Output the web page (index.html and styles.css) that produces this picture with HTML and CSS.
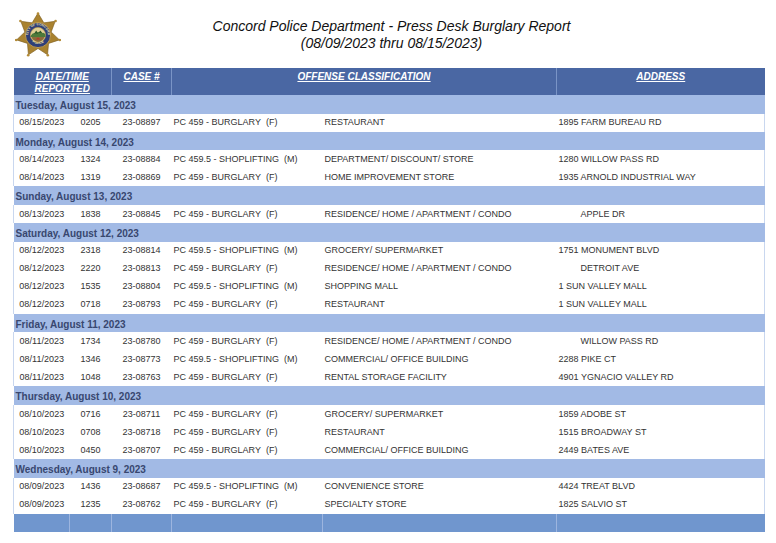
FILE: index.html
```html
<!DOCTYPE html>
<html lang="en">
<head>
<meta charset="utf-8">
<title>Concord Police Department - Press Desk Burglary Report</title>
<link rel="stylesheet" href="styles.css">
</head>
<body>
<div class="page">
  <header class="masthead">
    <div class="logo">
      <svg width="46" height="46" viewBox="0 0 46 46" aria-label="City of Concord Police badge">
        <defs>
          <path id="ringTop" d="M 13.2 23 A 9.8 9.8 0 0 1 32.8 23"/>
          <path id="ringBot" d="M 14.5 26.5 A 9.3 9.3 0 0 0 31.5 26.5"/>
        </defs>
        <polygon class="star" points="23,1 28.86,10.84 40.2,9.28 36.16,20 44.45,27.9 33.55,31.42 32.55,42.82 23,36.5 13.45,42.82 12.45,31.42 1.55,27.9 9.84,20 5.8,9.28 17.14,10.84"/>
        <circle cx="23" cy="1.6" r="1.3" class="tip"/>
        <circle cx="40.6" cy="9.0" r="1.3" class="tip"/>
        <circle cx="44.9" cy="28" r="1.3" class="tip"/>
        <circle cx="32.8" cy="43.3" r="1.3" class="tip"/>
        <circle cx="13.2" cy="43.3" r="1.3" class="tip"/>
        <circle cx="1.1" cy="28" r="1.3" class="tip"/>
        <circle cx="5.4" cy="9.0" r="1.3" class="tip"/>
        <circle cx="23" cy="23" r="12.6" class="ring"/>
        <circle cx="23" cy="23" r="7.6" class="field"/>
        <path class="hill" d="M15.6 24 Q18 19.5 21 21.5 Q24 18.5 27 21 Q29 20 30.4 22.5 L30.4 25 L15.6 25 Z"/>
        <path class="tree" d="M19 21.8 L21.2 18.6 L23.4 21.8 Z M23.6 21 L25.4 18.4 L27.2 21 Z"/>
        <path class="ground" d="M16.4 25 L29.6 25 Q27.5 29.8 23 30.6 Q18.5 29.8 16.4 25 Z"/>
        <path class="roof" d="M20.6 27.4 L23 25.6 L25.4 27.4 Z"/>
        <text class="ringtext"><textPath href="#ringTop" startOffset="50%" text-anchor="middle">CITY OF CONCORD</textPath></text>
        <text class="ringtext"><textPath href="#ringBot" startOffset="50%" text-anchor="middle">POLICE</textPath></text>
      </svg>
    </div>
    <div class="title">
      <p>Concord Police Department - Press Desk Burglary Report</p>
      <p>(08/09/2023 thru 08/15/2023)</p>
    </div>
  </header>

  <table class="report">
    <colgroup>
      <col class="c-date"><col class="c-time"><col class="c-case"><col class="c-off"><col class="c-cls"><col class="c-addr">
    </colgroup>
    <thead>
      <tr class="head">
        <th colspan="2"><span>DATE/TIME</span><br><span>REPORTED</span></th>
        <th class="div"><span>CASE #</span></th>
        <th colspan="2" class="div"><span>OFFENSE CLASSIFICATION</span></th>
        <th class="div"><span>ADDRESS</span></th>
      </tr>
    </thead>
    <tbody>
      <tr class="group"><td colspan="6">Tuesday, August 15, 2023</td></tr>
      <tr class="data"><td class="ctr">08/15/2023</td><td class="ctr">0205</td><td class="ctr">23-08897</td><td>PC 459 - BURGLARY&nbsp; (F)</td><td>RESTAURANT</td><td>1895 FARM BUREAU RD</td></tr>

      <tr class="group"><td colspan="6">Monday, August 14, 2023</td></tr>
      <tr class="data"><td class="ctr">08/14/2023</td><td class="ctr">1324</td><td class="ctr">23-08884</td><td>PC 459.5 - SHOPLIFTING&nbsp; (M)</td><td>DEPARTMENT/ DISCOUNT/ STORE</td><td>1280 WILLOW PASS RD</td></tr>
      <tr class="data"><td class="ctr">08/14/2023</td><td class="ctr">1319</td><td class="ctr">23-08869</td><td>PC 459 - BURGLARY&nbsp; (F)</td><td>HOME IMPROVEMENT STORE</td><td>1935 ARNOLD INDUSTRIAL WAY</td></tr>

      <tr class="group"><td colspan="6">Sunday, August 13, 2023</td></tr>
      <tr class="data"><td class="ctr">08/13/2023</td><td class="ctr">1838</td><td class="ctr">23-08845</td><td>PC 459 - BURGLARY&nbsp; (F)</td><td>RESIDENCE/ HOME / APARTMENT / CONDO</td><td class="indent">APPLE DR</td></tr>

      <tr class="group"><td colspan="6">Saturday, August 12, 2023</td></tr>
      <tr class="data"><td class="ctr">08/12/2023</td><td class="ctr">2318</td><td class="ctr">23-08814</td><td>PC 459.5 - SHOPLIFTING&nbsp; (M)</td><td>GROCERY/ SUPERMARKET</td><td>1751 MONUMENT BLVD</td></tr>
      <tr class="data"><td class="ctr">08/12/2023</td><td class="ctr">2220</td><td class="ctr">23-08813</td><td>PC 459 - BURGLARY&nbsp; (F)</td><td>RESIDENCE/ HOME / APARTMENT / CONDO</td><td class="indent">DETROIT AVE</td></tr>
      <tr class="data"><td class="ctr">08/12/2023</td><td class="ctr">1535</td><td class="ctr">23-08804</td><td>PC 459.5 - SHOPLIFTING&nbsp; (M)</td><td>SHOPPING MALL</td><td>1 SUN VALLEY MALL</td></tr>
      <tr class="data"><td class="ctr">08/12/2023</td><td class="ctr">0718</td><td class="ctr">23-08793</td><td>PC 459 - BURGLARY&nbsp; (F)</td><td>RESTAURANT</td><td>1 SUN VALLEY MALL</td></tr>

      <tr class="group"><td colspan="6">Friday, August 11, 2023</td></tr>
      <tr class="data"><td class="ctr">08/11/2023</td><td class="ctr">1734</td><td class="ctr">23-08780</td><td>PC 459 - BURGLARY&nbsp; (F)</td><td>RESIDENCE/ HOME / APARTMENT / CONDO</td><td class="indent">WILLOW PASS RD</td></tr>
      <tr class="data"><td class="ctr">08/11/2023</td><td class="ctr">1346</td><td class="ctr">23-08773</td><td>PC 459.5 - SHOPLIFTING&nbsp; (M)</td><td>COMMERCIAL/ OFFICE BUILDING</td><td>2288 PIKE CT</td></tr>
      <tr class="data"><td class="ctr">08/11/2023</td><td class="ctr">1048</td><td class="ctr">23-08763</td><td>PC 459 - BURGLARY&nbsp; (F)</td><td>RENTAL STORAGE FACILITY</td><td>4901 YGNACIO VALLEY RD</td></tr>

      <tr class="group"><td colspan="6">Thursday, August 10, 2023</td></tr>
      <tr class="data"><td class="ctr">08/10/2023</td><td class="ctr">0716</td><td class="ctr">23-08711</td><td>PC 459 - BURGLARY&nbsp; (F)</td><td>GROCERY/ SUPERMARKET</td><td>1859 ADOBE ST</td></tr>
      <tr class="data"><td class="ctr">08/10/2023</td><td class="ctr">0708</td><td class="ctr">23-08718</td><td>PC 459 - BURGLARY&nbsp; (F)</td><td>RESTAURANT</td><td>1515 BROADWAY ST</td></tr>
      <tr class="data"><td class="ctr">08/10/2023</td><td class="ctr">0450</td><td class="ctr">23-08707</td><td>PC 459 - BURGLARY&nbsp; (F)</td><td>COMMERCIAL/ OFFICE BUILDING</td><td>2449 BATES AVE</td></tr>

      <tr class="group"><td colspan="6">Wednesday, August 9, 2023</td></tr>
      <tr class="data"><td class="ctr">08/09/2023</td><td class="ctr">1436</td><td class="ctr">23-08687</td><td>PC 459.5 - SHOPLIFTING&nbsp; (M)</td><td>CONVENIENCE STORE</td><td>4424 TREAT BLVD</td></tr>
      <tr class="data"><td class="ctr">08/09/2023</td><td class="ctr">1235</td><td class="ctr">23-08762</td><td>PC 459 - BURGLARY&nbsp; (F)</td><td>SPECIALTY STORE</td><td>1825 SALVIO ST</td></tr>
    </tbody>
    <tfoot>
      <tr class="foot"><td></td><td></td><td></td><td></td><td></td><td></td></tr>
    </tfoot>
  </table>
</div>
</body>
</html>
```

FILE: styles.css
```css
html, body {
  margin: 0;
  padding: 0;
  background: #ffffff;
}

.page {
  width: 751px;
  padding: 0 12px 0 13px;
  font-family: "Liberation Sans", Arial, sans-serif;
}

.masthead {
  display: grid;
  grid-template-columns: 48px 1fr 48px;
  height: 68px;
}

.logo {
  padding: 12px 0 0 2px;
}

.logo svg {
  display: block;
}

.star {
  fill: #a9822f;
  stroke: #7a5a1c;
  stroke-width: 0.6;
  stroke-linejoin: round;
}

.tip {
  fill: #b38b36;
}

.ring {
  fill: #2f3f78;
  stroke: #c9a24a;
  stroke-width: 0.9;
}

.field {
  fill: #e0cf94;
  stroke: #c9a24a;
  stroke-width: 0.6;
}

.hill {
  fill: #4d7a3a;
}

.tree {
  fill: #2f5a2a;
}

.ground {
  fill: #8c6a3a;
}

.roof {
  fill: #b6382c;
}

.ringtext {
  font-family: "Liberation Sans", Arial, sans-serif;
  font-size: 3.3px;
  font-weight: bold;
  fill: #f0e2a8;
}

.title {
  padding: 18px 0 0 6px;
  text-align: center;
  font-style: italic;
  font-size: 14px;
  line-height: 17px;
  color: #111111;
}

.title p {
  margin: 0;
}

.report {
  width: 751px;
  border-collapse: collapse;
  table-layout: fixed;
  font-family: "Liberation Sans", Arial, sans-serif;
}

.c-date { width: 56px; }
.c-time { width: 42px; }
.c-case { width: 60px; }
.c-off  { width: 151px; }
.c-cls  { width: 234px; }
.c-addr { width: 208px; }

.head {
  height: 26px;
}

.head th {
  background: #4a67a3;
  color: #ffffff;
  font-size: 10px;
  line-height: 12px;
  font-weight: bold;
  font-style: italic;
  text-align: center;
  vertical-align: top;
  padding: 3px 0 0;
}

.head th span {
  text-decoration: underline;
}

.head th.div {
  border-left: 1px solid #7a94c6;
}

.group {
  height: 18.7px;
}

.group td {
  background: #a2bae5;
  color: #38476f;
  font-size: 10px;
  font-weight: bold;
  line-height: 12px;
  padding: 3px 2px 0;
  white-space: nowrap;
}

.data {
  height: 18px;
}

.data td {
  background: #ffffff;
  color: #333333;
  font-size: 9px;
  line-height: 11px;
  padding: 0 2px;
  white-space: nowrap;
  overflow: hidden;
}

.data td:first-child {
  border-left: 1px solid #c9d7ef;
}

.data td:last-child {
  border-right: 1px solid #c9d7ef;
}

.data td.ctr {
  text-align: center;
}

.data td.indent {
  padding-left: 24px;
}

.foot {
  height: 18px;
}

.foot td {
  background: #7096ce;
  padding: 0;
}

.foot td + td {
  border-left: 1px solid #9db5df;
}
```
